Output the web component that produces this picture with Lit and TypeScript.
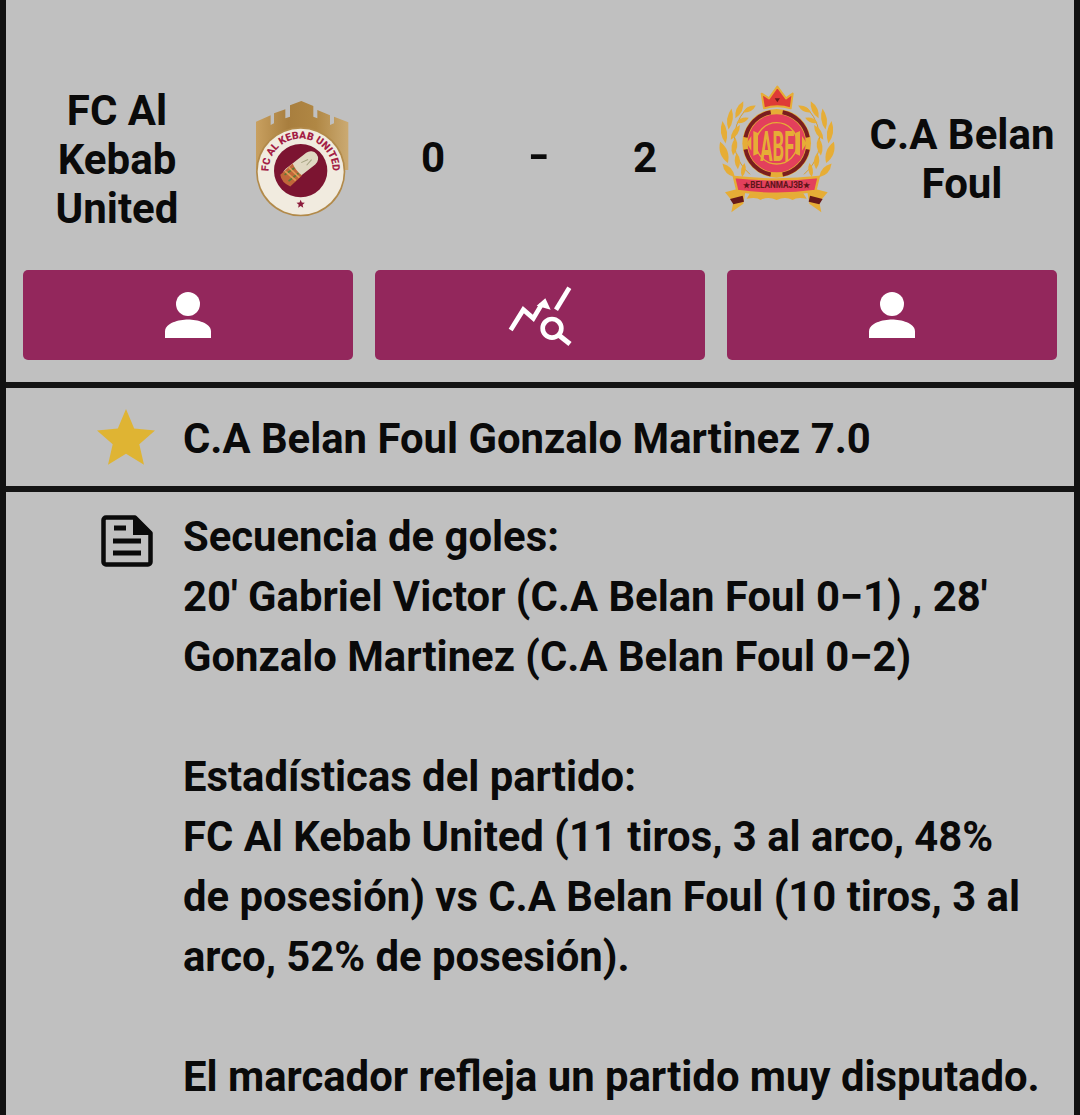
import { LitElement, html, css, svg } from "lit";
import { customElement } from "lit/decorators.js";

const person = html`<svg width="48" height="46" viewBox="0 0 48 46"><ellipse cx="24" cy="12" rx="12" ry="12" fill="#fff"/><path fill="#fff" d="M1 46v-6.500C1 31 15 27.500 24 27.500S47 31 47 39.500V46z"/></svg>`;

const query = html`<svg width="100" height="80" viewBox="0 0 300 240" fill="none" stroke="#fff" stroke-width="14"><path d="M62 165 L100 104 L130 130 L155 88"/><path fill="#fff" stroke="none" d="M140 92 L166 70 L182 104z"/><path d="M198 104 L238 38"/><circle cx="186" cy="160" r="28" stroke-width="14"/><path stroke-width="15" d="M206 180 L240 207"/></svg>`;

const kebabLogo = html`<svg width="140" height="150" viewBox="0 0 420 450">
  <defs>
    <linearGradient id="g" x1="0" y1="0" x2="1" y2="0"><stop offset="0" stop-color="#c8a060"/><stop offset=".35" stop-color="#a87e3e"/><stop offset=".65" stop-color="#b08744"/><stop offset="1" stop-color="#cbaa72"/></linearGradient>
    <path id="arc" d="M119.300 296.800 A96 96 0 1 1 304.700 296.800"/>
  </defs>
  <path fill="url(#g)" d="M78 125 L122 106 V135 L132 130 V100 L166 88 V115 L180 110 V76 L214 63 L250 78 V110 L262 115 V90 L300 106 V135 L312 130 V110 L355 127 V270 H78Z"/>
  <circle cx="212" cy="275" r="134" fill="#b28a4a"/>
  <circle cx="212" cy="275" r="129" fill="#f1ebdf"/>
  <circle cx="212" cy="272" r="80" fill="#7c1431"/>
  <text class="lt"><textPath href="#arc" startOffset="50%" text-anchor="middle">FC AL KEBAB UNITED</textPath></text>
  <g transform="rotate(-38 212 262)">
    <rect x="152" y="238" width="122" height="44" rx="22" fill="#e0d8c2"/>
    <path d="M150 242 Q138 262 152 288 L200 284 Q194 262 200 238Z" fill="#c0673a"/>
    <path d="M160 250 L196 252 M158 272 L196 272" stroke="#5d7a36" stroke-width="5"/>
    <path d="M168 242 L176 284 M184 240 L190 284" stroke="#e09a55" stroke-width="5"/>
    <path d="M222 252l22 5M230 268l22-4" stroke="#a5a382" stroke-width="3"/>
  </g>
  <path fill="#8b1a3a" d="M212 359l3.500 8.500 9 .7-6.800 6 2.100 8.800-7.800-4.700-7.800 4.700 2.100-8.800-6.800-6 9-.7z"/>
</svg>`;

const leaf = (x: number, y: number, r: number, l = 30, w = 14) =>
  svg`<path fill="#e6ad36" transform="translate(${x} ${y}) rotate(${r})" d="M0 ${-l} Q${w} 0 0 ${l} Q${-w} 0 0 ${-l}Z"/>`;

const wreath = svg`
  <path fill="none" stroke="#d99f2f" stroke-width="3" d="M150 298 Q85 240 110 150 Q118 125 140 100"/>
  ${leaf(72, 232, -20, 34, 22)}
  ${leaf(72, 172, -8, 34, 18)}
  ${leaf(90, 132, 8, 32, 17)}
  ${leaf(118, 104, 25, 28, 17)}
  ${leaf(148, 102, 62, 22, 15)}
  ${leaf(128, 136, 68, 20, 14)}
  ${leaf(106, 172, 32, 26, 16)}
  ${leaf(103, 215, 8, 27, 17)}
  ${leaf(112, 258, -4, 25, 16)}
  ${leaf(86, 286, -42, 28, 19)}
  ${leaf(130, 285, 10, 21, 14)}
`;

const crestLogo = html`<svg width="150" height="150" viewBox="0 0 450 450">
  ${wreath}
  <g transform="matrix(-1 0 0 1 462 0)">${wreath}</g>
  <path fill="#df3a36" stroke="#e6ad36" stroke-width="6" stroke-linejoin="round" d="M192 100 L185 56 L207 70 L232 35 L258 70 L278 56 L272 100 Q232 88 192 100Z"/>
  <path fill="#6d1b1b" d="M224 70h16l-8 12z"/>
  <circle cx="230" cy="205" r="103" fill="#e6ad36"/>
  <circle cx="230" cy="205" r="95" fill="none" stroke="#7a1d1f" stroke-width="12" pathLength="100" stroke-dasharray="19 6" stroke-dashoffset="-3"/>
  <circle cx="230" cy="205" r="87" fill="#e3405c"/>
  <circle cx="230" cy="205" r="62" fill="none" stroke="#e6ad36" stroke-width="4"/>
  <path fill="#e6ad36" d="M160 168l14 6v62l-14 6zM300 168l-14 6v62l14 6zM140 205l14-22v44zM320 205l-14-22v44z"/>
  <text class="ct" x="232" y="258" text-anchor="middle" textLength="102" lengthAdjust="spacingAndGlyphs">ABF</text>
  <path fill="#e6ad36" d="M75 352 L112 342 L136 350 L130 386 L94 412 L100 382Z"/>
  <path fill="#e6ad36" d="M383 352 L346 342 L322 350 L328 386 L364 412 L358 382Z"/>
  <path fill="#66191a" d="M90 372 L128 362 L132 380 L100 388Z"/>
  <path fill="#66191a" d="M368 372 L330 362 L326 380 L358 388Z"/>
  <path fill="#e6ad36" d="M150 355h160l10 16q-30-6-42 4q-22-12-48 0q-26-12-48 0q-12-10-42-4z"/>
  <path fill="#e3405c" stroke="#e6ad36" stroke-width="7" d="M102 306 Q230 320 356 306 L346 348 Q230 364 112 348Z"/>
  <text class="bt" x="230" y="338" text-anchor="middle" textLength="200" lengthAdjust="spacingAndGlyphs">★BELANMAJ3B★</text>
</svg>`;

@customElement("app-root")
export class AppRoot extends LitElement {
  static styles = css`
    :host {
      display: block;
      height: 1115px;
      overflow: hidden;
      box-sizing: border-box;
      background: #c0c0c0;
      border-left: 6px solid #111;
      border-right: 6px solid #111;
      font-family: Roboto, "Liberation Sans", sans-serif;
      font-weight: 700;
      color: #0a0a0a;
    }
    .match {
      display: grid;
      grid-template-columns: 222px 152px 106px 106px 106px 158px 218px;
      align-items: center;
      height: 238px;
      box-sizing: border-box;
      padding-top: 80px;
    }
    .team { font-size: 42px; line-height: 49px; text-align: center; padding: 0 30px; }
    .team.away { padding: 0 6px 0 0; }
    .logo { display: flex; justify-content: center; }
    .logo.home { padding-right: 8px; margin-top: -8px; }
    .logo.crest { padding-right: 4px; margin-top: -18px; }
    .score { font-size: 42px; line-height: 49px; text-align: center; margin-top: -3px; }
    .score.dash { transform: scaleX(1.35); margin-top: -7px; }
    .actions {
      display: grid;
      grid-template-columns: repeat(3, 330px);
      gap: 22px;
      padding: 32px 17px 0;
    }
    .btn {
      height: 90px;
      background: #93275c;
      border-radius: 5px;
      display: flex;
      align-items: center;
      justify-content: center;
    }
    .rating {
      margin-top: 22px;
      border-top: 6px solid #141414;
      border-bottom: 6px solid #141414;
      height: 98px;
      display: flex;
      align-items: center;
      font-size: 41.800px;
      padding-left: 91px;
      gap: 28px;
    }
    .rating span { padding-top: 2px; }
    svg { display: block; flex: none; }
    .body {
      display: flex;
      padding: 23px 0 0 95px;
      gap: 30px;
    }
    .doc { flex: none; }
    .text {
      font-size: 41.800px;
      line-height: 60px;
      white-space: pre-line;
      width: 885px;
      margin-top: -8px;
    }
    .lt { font: 900 31px Roboto, sans-serif; fill: #a31d45; }
    .ct { font: 700 130px Roboto, sans-serif; fill: #e6ad36; }
    .bt { font: 700 25px Roboto, sans-serif; fill: #5c1518; }
  `;

  render() {
    return html`
      <section class="match">
        <div class="team">FC Al Kebab United</div>
        <div class="logo home">${kebabLogo}</div>
        <div class="score">0</div>
        <div class="score dash">-</div>
        <div class="score">2</div>
        <div class="logo crest">${crestLogo}</div>
        <div class="team away">C.A Belan Foul</div>
      </section>
      <nav class="actions">
        <div class="btn">${person}</div>
        <div class="btn">${query}</div>
        <div class="btn">${person}</div>
      </nav>
      <div class="rating">
        <svg width="58" height="56" viewBox="0 0 58 56"><path fill="#dfb433" d="M29 0l8.200 19.600 20.800 1.900-15.700 13.700 4.700 20.600L29 44.800 11 55.800l4.700-20.600L0 21.500l20.800-1.900z"/></svg>
        <span>C.A Belan Foul Gonzalo Martinez 7.0</span>
      </div>
      <div class="body">
        <svg class="doc" width="52" height="52" viewBox="0 0 52 52" fill="none" stroke="#0a0a0a"><path stroke-width="4.500" stroke-linejoin="round" d="M2.500 5a2.500 2.500 0 0 1 2.500-2.500h29l15.500 15.500v29a2.500 2.500 0 0 1-2.500 2.500H5a2.500 2.500 0 0 1-2.500-2.500z"/><path stroke-width="5" d="M13 13h12M12 26h28M12 38h28"/><path fill="#0a0a0a" stroke="none" d="M32 2h3l15 15v3H32z"/></svg>
        <div class="text">Secuencia de goles:
20' Gabriel Victor (C.A Belan Foul 0−1) , 28'
Gonzalo Martinez (C.A Belan Foul 0−2)

Estadísticas del partido:
FC Al Kebab United (11 tiros, 3 al arco, 48%
de posesión) vs C.A Belan Foul (10 tiros, 3 al
arco, 52% de posesión).

El marcador refleja un partido muy disputado.</div>
      </div>
    `;
  }
}
